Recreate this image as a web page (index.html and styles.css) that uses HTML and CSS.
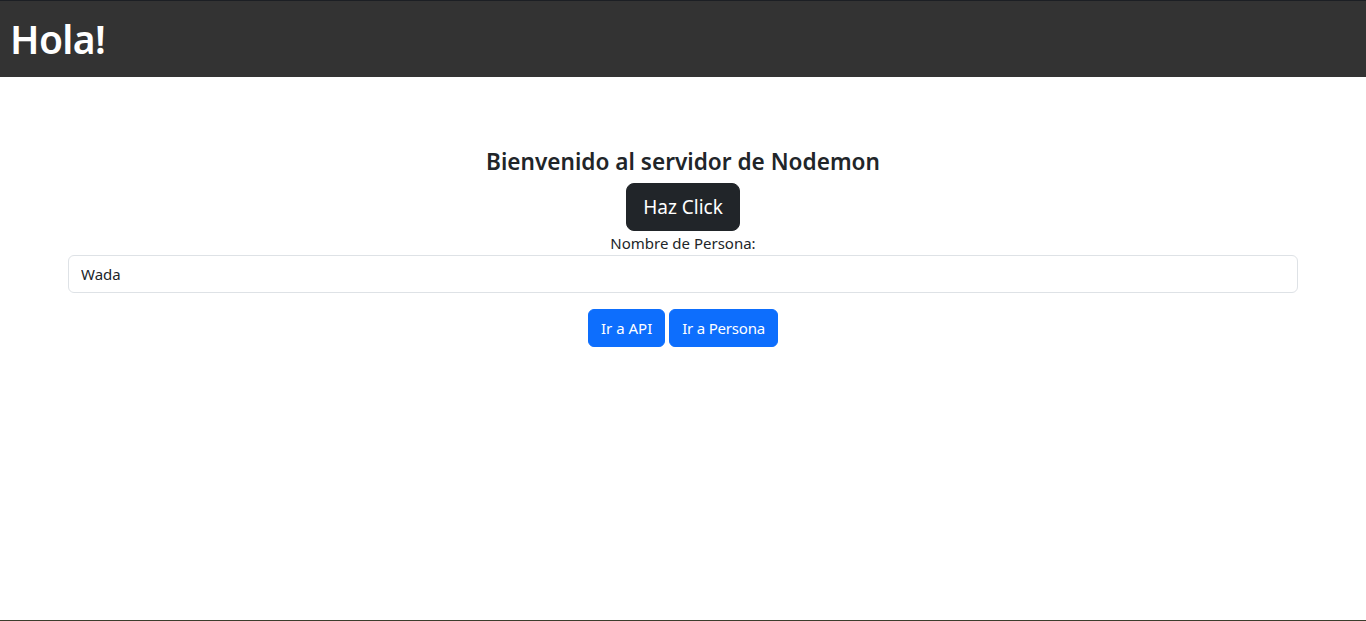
FILE: index.html
```html
<!DOCTYPE html>
<html lang="es">
<head>
<meta charset="utf-8">
<title>Hola!</title>
<link rel="stylesheet" href="styles.css">
</head>
<body>
<div class="page">
  <header class="topbar">
    <h1 class="brand">Hola!</h1>
  </header>
  <main class="content">
    <h4 class="welcome">Bienvenido al servidor de Nodemon</h4>
    <button class="btn btn-dark btn-lg" type="button">Haz Click</button>
    <label class="field-label" for="persona">Nombre de Persona:</label>
    <input class="field" id="persona" type="text" value="Wada">
    <div class="actions">
      <a class="btn btn-primary" href="#">Ir a API</a>
      <a class="btn btn-primary btn-wide" href="#">Ir a Persona</a>
    </div>
  </main>
  <footer class="bottom"></footer>
</div>
</body>
</html>
```
FILE: styles.css
```css
* { box-sizing: border-box; }
html, body { margin: 0; padding: 0; }
body {
  font-family: "Noto Sans", "Open Sans", "DejaVu Sans", sans-serif;
  color: #212529;
  background: #fff;
  font-size: 16px;
  line-height: 1.5;
}
.page {
  display: flex;
  flex-direction: column;
  height: 621px;
}
.topbar {
  background: #333333;
  border-top: 1px solid #1c1f24;
  height: 77px;
  display: flex;
  align-items: center;
  padding-left: 10px;
}
.brand {
  margin: 0;
  color: #fff;
  font-size: 39px;
  font-weight: 600;
  line-height: 48px;
  letter-spacing: -0.6px;
}
.content {
  flex: 1;
  display: flex;
  flex-direction: column;
  align-items: center;
  padding: 70px 68px 0;
}
.welcome {
  margin: 0 0 7px;
  font-size: 22.6px;
  font-weight: 600;
  line-height: 29px;
}
.btn {
  display: inline-block;
  border: 1px solid transparent;
  border-radius: 6px;
  font-family: inherit;
  font-size: 15px;
  line-height: 24px;
  padding: 6px 12px;
  text-decoration: none;
  cursor: pointer;
}
.btn-wide { letter-spacing: -0.2px; }
.btn-dark { background: #212529; border-color: #212529; color: #fff; }
.btn-primary { background: #0d6efd; border-color: #0d6efd; color: #fff; }
.btn-lg {
  font-size: 19px;
  line-height: 30px;
  padding: 8px 16px;
  border-radius: 8px;
}
.field-label {
  font-size: 15px;
  line-height: 24px;
}
.field {
  width: 100%;
  height: 38px;
  border: 1px solid #dee2e6;
  border-radius: 6px;
  padding: 6px 12px;
  font-family: inherit;
  font-size: 15px;
  color: #212529;
}
.actions {
  margin-top: 16px;
  display: flex;
  gap: 4px;
}
.bottom {
  height: 1px;
  background: #3b3d2c;
}
```
